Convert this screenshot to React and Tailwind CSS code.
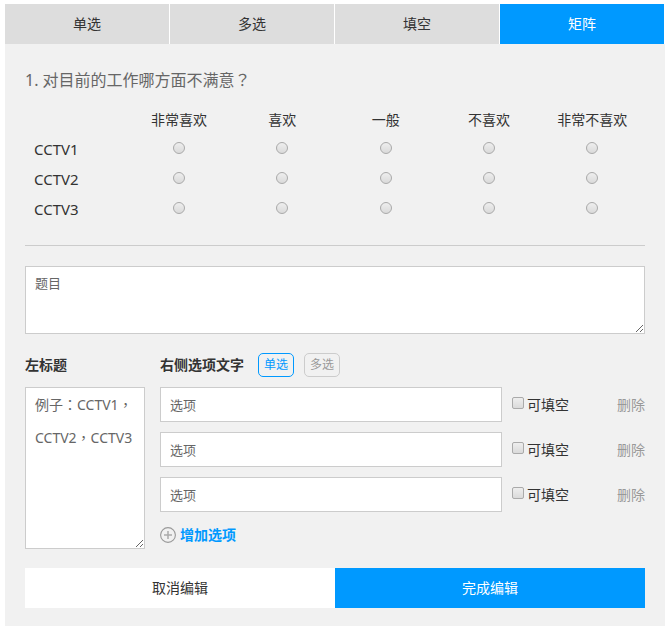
import { useState } from "react";

const tabs = ["单选", "多选", "填空", "矩阵"];
const columns = ["非常喜欢", "喜欢", "一般", "不喜欢", "非常不喜欢"];
const rows = ["CCTV1", "CCTV2", "CCTV3"];
const options = [1, 2, 3];

function PlusCircle() {
  return (
    <svg width="16" height="16" viewBox="0 0 16 16" fill="none" stroke="#999999" aria-hidden="true">
      <circle cx="8" cy="8" r="7.4" strokeWidth="1.1" />
      <path d="M4 8h8M8 4v8" strokeWidth="1.5" stroke="#aaaaaa" />
    </svg>
  );
}

function Tabs({ active, onChange }) {
  return (
    <nav className="grid grid-cols-4">
      {tabs.map((tab) => (
        <button
          key={tab}
          type="button"
          onClick={() => onChange(tab)}
          className={
            "h-10 border-r border-white " +
            (tab === active ? "bg-[#0099ff] text-white" : "bg-[#dddddd]")
          }
        >
          {tab}
        </button>
      ))}
    </nav>
  );
}

function MatrixQuestion() {
  return (
    <section className="border-b border-[#cccccc] pb-5">
      <h2 className="h-[37px] text-base text-[#666666]">
        1. 对目前的工作哪方面不满意
        <span className="font-['Noto_Sans_CJK_TC',sans-serif] leading-none">？</span>
      </h2>
      <table className="w-full table-fixed">
        <thead>
          <tr className="h-[30px]">
            <td />
            {columns.map((column) => (
              <th key={column} scope="col" className="p-0 pr-0.5 text-center font-normal">
                {column}
              </th>
            ))}
          </tr>
        </thead>
        <tbody>
          {rows.map((row) => (
            <tr key={row} className="h-[30px]">
              <th scope="row" className="p-0 pl-[9px] text-left text-[15px] font-normal">
                {row}
              </th>
              {columns.map((column) => (
                <td key={column} className="p-0 pr-0.5 pb-1">
                  <input
                    type="radio"
                    name={row}
                    aria-label={row + " " + column}
                    className="mx-auto block size-3 appearance-none rounded-full border border-[#aaaaaa] bg-linear-to-b from-[#eeeeee] to-[#dadada] checked:border-4 checked:border-[#0099ff]"
                  />
                </td>
              ))}
            </tr>
          ))}
        </tbody>
      </table>
    </section>
  );
}

function OptionRow() {
  return (
    <li className="grid grid-cols-[1fr_133px] items-center gap-2.5">
      <input
        type="text"
        aria-label="选项"
        placeholder="选项"
        className="h-[35px] w-full min-w-0 border border-[#cccccc] bg-white px-[9px] text-[13px] placeholder:text-[#666666]"
      />
      <div className="flex items-center justify-between">
        <label className="flex items-center gap-[3px]">
          <input
            type="checkbox"
            className="mb-1 size-3 appearance-none rounded-xs border border-[#aaaaaa] bg-linear-to-b from-[#eeeeee] to-[#dadada] checked:border-4 checked:border-[#0099ff]"
          />
          可填空
        </label>
        <button type="button" className="text-[#999999]">
          删除
        </button>
      </div>
    </li>
  );
}

export default function App() {
  const [tab, setTab] = useState("矩阵");
  const [mode, setMode] = useState("单选");

  return (
    <div className="min-h-screen bg-white pt-1 pr-1 pl-[5px] font-['Noto_Sans','Noto_Sans_CJK_SC',sans-serif] text-sm text-[#333333]">
      <main className="bg-[#f1f1f1]">
        <Tabs active={tab} onChange={setTab} />
        <form className="px-5 pt-6 pb-[18px]" onSubmit={(event) => event.preventDefault()}>
          <MatrixQuestion />

          <textarea
            aria-label="题目"
            placeholder="题目"
            className="mt-5 block h-[68px] w-full border border-[#cccccc] bg-white px-[9px] text-[13px] leading-[33px] placeholder:text-[#666666]"
          />

          <div className="mt-[19px] grid grid-cols-[120px_1fr] gap-x-[15px]">
            <div>
              <label htmlFor="row-titles" className="flex h-6 items-center font-bold">
                左标题
              </label>
              <textarea
                id="row-titles"
                placeholder="例子：CCTV1，CCTV2，CCTV3"
                className="mt-2.5 block h-[162px] w-full border border-[#cccccc] bg-white pl-[9px] font-['Noto_Sans','Noto_Sans_CJK_TC',sans-serif] text-sm leading-[33px] placeholder:text-[#666666]"
              />
            </div>
            <div>
              <div className="flex h-6 items-center">
                <h3 className="mr-[14px] font-bold">右侧选项文字</h3>
                <div className="flex gap-2.5">
                  {["单选", "多选"].map((item) => (
                    <button
                      key={item}
                      type="button"
                      onClick={() => setMode(item)}
                      className={
                        "h-6 w-9 rounded-[5px] border text-xs " +
                        (item === mode
                          ? "border-[#0099ff] text-[#0099ff]"
                          : "border-[#cccccc] text-[#999999]")
                      }
                    >
                      {item}
                    </button>
                  ))}
                </div>
              </div>
              <ul className="mt-2.5 grid gap-2.5">
                {options.map((option) => (
                  <OptionRow key={option} />
                ))}
              </ul>
              <button
                type="button"
                className="mt-[13px] flex items-center gap-1 font-bold text-[#0099ff]"
              >
                <PlusCircle />
                增加选项
              </button>
            </div>
          </div>

          <div className="mt-[19px] grid grid-cols-2">
            <button type="button" className="h-10 bg-white">
              取消编辑
            </button>
            <button type="submit" className="h-10 bg-[#0099ff] text-white">
              完成编辑
            </button>
          </div>
        </form>
      </main>
    </div>
  );
}
